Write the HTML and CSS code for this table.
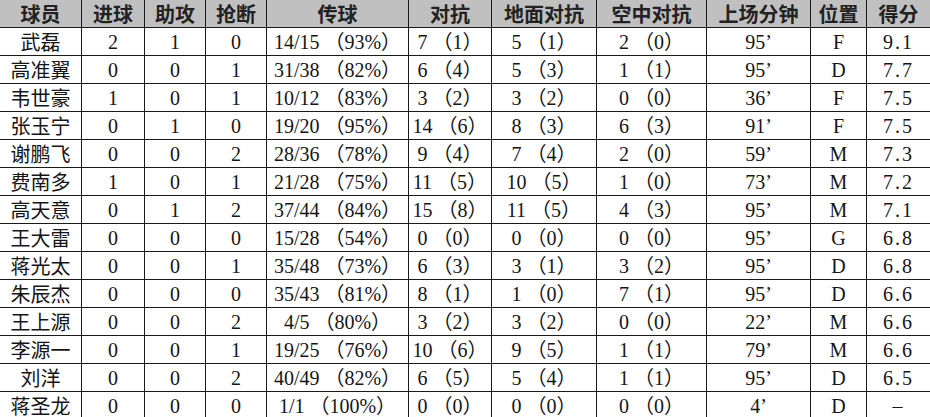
FILE: index.html
```html
<!DOCTYPE html>
<html lang="zh">
<head>
<meta charset="utf-8">
<title>球员数据</title>
<link rel="stylesheet" href="styles.css">
</head>
<body>
<div class="sheet">
  <div class="row head">
    <div class="c">球员</div><div class="c">进球</div><div class="c">助攻</div><div class="c">抢断</div><div class="c">传球</div><div class="c">对抗</div><div class="c">地面对抗</div><div class="c">空中对抗</div><div class="c">上场分钟</div><div class="c">位置</div><div class="c">得分</div>
  </div>
  <div class="row"><div class="c name">武磊</div><div class="c">2</div><div class="c">1</div><div class="c">0</div><div class="c">14/15 （93%）</div><div class="c">7 （1）</div><div class="c">5 （1）</div><div class="c">2 （0）</div><div class="c">95’</div><div class="c pos">F</div><div class="c score">9.1</div></div>
  <div class="row"><div class="c name">高准翼</div><div class="c">0</div><div class="c">0</div><div class="c">1</div><div class="c">31/38 （82%）</div><div class="c">6 （4）</div><div class="c">5 （3）</div><div class="c">1 （1）</div><div class="c">95’</div><div class="c pos">D</div><div class="c score">7.7</div></div>
  <div class="row"><div class="c name">韦世豪</div><div class="c">1</div><div class="c">0</div><div class="c">1</div><div class="c">10/12 （83%）</div><div class="c">3 （2）</div><div class="c">3 （2）</div><div class="c">0 （0）</div><div class="c">36’</div><div class="c pos">F</div><div class="c score">7.5</div></div>
  <div class="row"><div class="c name">张玉宁</div><div class="c">0</div><div class="c">1</div><div class="c">0</div><div class="c">19/20 （95%）</div><div class="c">14 （6）</div><div class="c">8 （3）</div><div class="c">6 （3）</div><div class="c">91’</div><div class="c pos">F</div><div class="c score">7.5</div></div>
  <div class="row"><div class="c name">谢鹏飞</div><div class="c">0</div><div class="c">0</div><div class="c">2</div><div class="c">28/36 （78%）</div><div class="c">9 （4）</div><div class="c">7 （4）</div><div class="c">2 （0）</div><div class="c">59’</div><div class="c pos">M</div><div class="c score">7.3</div></div>
  <div class="row"><div class="c name">费南多</div><div class="c">1</div><div class="c">0</div><div class="c">1</div><div class="c">21/28 （75%）</div><div class="c">11 （5）</div><div class="c">10 （5）</div><div class="c">1 （0）</div><div class="c">73’</div><div class="c pos">M</div><div class="c score">7.2</div></div>
  <div class="row"><div class="c name">高天意</div><div class="c">0</div><div class="c">1</div><div class="c">2</div><div class="c">37/44 （84%）</div><div class="c">15 （8）</div><div class="c">11 （5）</div><div class="c">4 （3）</div><div class="c">95’</div><div class="c pos">M</div><div class="c score">7.1</div></div>
  <div class="row"><div class="c name">王大雷</div><div class="c">0</div><div class="c">0</div><div class="c">0</div><div class="c">15/28 （54%）</div><div class="c">0 （0）</div><div class="c">0 （0）</div><div class="c">0 （0）</div><div class="c">95’</div><div class="c pos">G</div><div class="c score">6.8</div></div>
  <div class="row"><div class="c name">蒋光太</div><div class="c">0</div><div class="c">0</div><div class="c">1</div><div class="c">35/48 （73%）</div><div class="c">6 （3）</div><div class="c">3 （1）</div><div class="c">3 （2）</div><div class="c">95’</div><div class="c pos">D</div><div class="c score">6.8</div></div>
  <div class="row"><div class="c name">朱辰杰</div><div class="c">0</div><div class="c">0</div><div class="c">0</div><div class="c">35/43 （81%）</div><div class="c">8 （1）</div><div class="c">1 （0）</div><div class="c">7 （1）</div><div class="c">95’</div><div class="c pos">D</div><div class="c score">6.6</div></div>
  <div class="row"><div class="c name">王上源</div><div class="c">0</div><div class="c">0</div><div class="c">2</div><div class="c">4/5 （80%）</div><div class="c">3 （2）</div><div class="c">3 （2）</div><div class="c">0 （0）</div><div class="c">22’</div><div class="c pos">M</div><div class="c score">6.6</div></div>
  <div class="row"><div class="c name">李源一</div><div class="c">0</div><div class="c">0</div><div class="c">1</div><div class="c">19/25 （76%）</div><div class="c">10 （6）</div><div class="c">9 （5）</div><div class="c">1 （1）</div><div class="c">79’</div><div class="c pos">M</div><div class="c score">6.6</div></div>
  <div class="row"><div class="c name">刘洋</div><div class="c">0</div><div class="c">0</div><div class="c">2</div><div class="c">40/49 （82%）</div><div class="c">6 （5）</div><div class="c">5 （4）</div><div class="c">1 （1）</div><div class="c">95’</div><div class="c pos">D</div><div class="c score">6.5</div></div>
  <div class="row"><div class="c name">蒋圣龙</div><div class="c">0</div><div class="c">0</div><div class="c">0</div><div class="c">1/1 （100%）</div><div class="c">0 （0）</div><div class="c">0 （0）</div><div class="c">0 （0）</div><div class="c">4’</div><div class="c pos">D</div><div class="c score">–</div></div>
</div>
</body>
</html>
```

FILE: styles.css
```css
html, body {
  margin: 0;
  padding: 0;
  background: #ffffff;
}

.sheet {
  width: 930px;
  display: flex;
  flex-direction: column;
  font-family: "Liberation Serif", "Noto Sans CJK SC", serif;
  font-size: 20px;
  color: #151515;
}

.row {
  display: grid;
  grid-template-columns: 82px 63px 61px 61px 142px 83px 105px 110px 104px 56px 63px;
  height: 28px;
}

.c {
  box-sizing: border-box;
  height: 28px;
  border-right: 1px solid #1a1a1a;
  border-bottom: 1px solid #1a1a1a;
  display: flex;
  align-items: center;
  justify-content: center;
  white-space: nowrap;
  line-height: 1;
  padding-top: 1px;
}

.c:last-child {
  border-right: none;
}

.head {
  background: #c0c0c0;
}

.head .c {
  font-family: "Noto Sans CJK SC", sans-serif;
  font-weight: 700;
  color: #222222;
  letter-spacing: 0;
}

.name {
  font-family: "Noto Sans CJK SC", sans-serif;
  font-weight: 400;
}

.score {
  letter-spacing: 2px;
}
```
